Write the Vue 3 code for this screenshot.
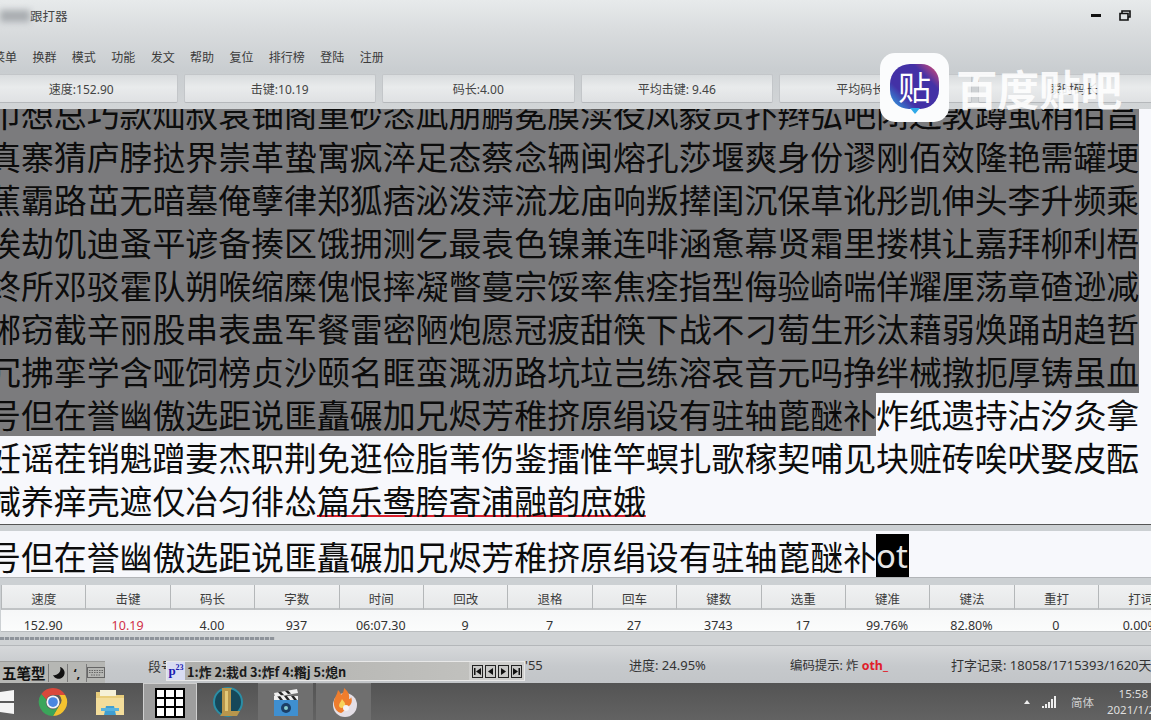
<template>
  <div class="app">
    <header class="top">
      <div class="titlebar">
        <span class="blurred"></span>
        <span class="title">跟打器</span>
        <span class="winbtns">
          <svg width="10" height="4" viewBox="0 0 10 4"><rect width="10" height="3" fill="#111" /></svg>
          <svg width="12" height="11" viewBox="0 0 12 11" fill="none" stroke="#111" stroke-width="1.6">
            <path d="M3 3V1h8v6H9M1 3.5h8v6.5H1z" />
          </svg>
        </span>
      </div>
      <nav class="menu">
        <span v-for="m in menus" :key="m">{{ m }}</span>
      </nav>
      <div class="stats">
        <button v-for="b in buttons" :key="b" class="stat">{{ b }}</button>
      </div>
    </header>

    <section class="reading">
      <div class="rows">
        <div v-for="(r, i) in rows" :key="i" class="row">
          <span class="sel">{{ r.sel }}</span><span>{{ r.plain }}</span><span class="typo">{{ r.wavy }}</span>
        </div>
      </div>
    </section>

    <section class="input">
      <span class="typed">号但在誉幽傲选距说匪矗碾加兄烬芳稚挤原绢设有驻轴蓖醚补</span><span class="ime-text">ot</span>
    </section>

    <section class="table">
      <div v-for="c in cols" :key="c.h" class="cell head">{{ c.h }}</div>
      <div v-for="c in cols" :key="c.v + c.h" class="cell val" :class="{ red: c.red }">{{ c.v }}</div>
    </section>

    <div class="progress"><div class="dots"></div></div>

    <footer class="status">
      <div class="imebar">
        <span class="ime-name">五笔型</span>
        <span class="ime-btn">
          <svg width="13" height="13" viewBox="0 0 13 13"><path d="M8 1a6 6 0 1 1-7 8 6 6 0 0 0 7-8z" fill="#111" /></svg>
        </span>
        <span class="ime-btn dotsign">‘,</span>
        <span class="ime-btn">
          <svg width="18" height="13" viewBox="0 0 18 13" fill="none" stroke="#666"><rect x=".5" y="1.5" width="17" height="10" /><path d="M2 4.5h14M2 6.5h14M4 9h10" stroke-dasharray="1.5 1" /></svg>
        </span>
      </div>
      <span class="seg">段号:</span>
      <span>'55</span>
      <span>进度: 24.95%</span>
      <span class="code">编码提示: 炸 <b class="hint">oth_</b></span>
      <span>打字记录: 18058/1715393/1620天</span>

      <div class="candidates">
        <span class="cand-logo">p<sup>23</sup></span>
        <span class="cand-text">1:炸 2:栽d 3:炸f 4:糌j 5:熄n</span>
        <span class="cand-nav">
          <svg v-for="p in navIcons" :key="p" width="11" height="13" viewBox="0 0 11 13">
            <rect x=".5" y=".5" width="10" height="12" fill="#c9c9c7" stroke="#222" />
            <path :d="p" fill="#111" />
          </svg>
        </span>
      </div>
    </footer>

    <div class="taskbar">
      <svg class="winlogo" width="14" height="24" viewBox="0 0 14 24">
        <path d="M0 2l14-2v11H0zM0 13h14v11L0 22z" fill="#f4f4f4" />
      </svg>
      <span class="slot s-chrome">
        <svg width="30" height="30" viewBox="0 0 32 32">
          <path d="M16 1a15 15 0 0 1 13 7.5H16a7.500 7.500 0 0 0-7 5L3.500 7.500A15 15 0 0 1 16 1z" fill="#d9483b" />
          <path d="M29 8.500A15 15 0 0 1 16 31l6.500-11a7.500 7.500 0 0 0 0-11.500z" fill="#f3c22f" />
          <path d="M3.500 7.500L9 13.500a7.500 7.500 0 0 0 13.500 6.500L16 31A15 15 0 0 1 3.500 7.500z" fill="#3ba55a" />
          <circle cx="16" cy="16" r="7" fill="#f5f5f5" />
          <circle cx="16" cy="16" r="5.200" fill="#4a86e0" />
        </svg>
      </span>
      <span class="slot s-folder">
        <svg width="30" height="28" viewBox="0 0 30 28">
          <path d="M1 4h10l2 3h16v20H1z" fill="#e8cd7c" />
          <path d="M1 10h28v17H1z" fill="#f3dd9b" />
          <path d="M5 2h16v6H5z" fill="#f6f1d8" />
          <path d="M9 27l2-9h8l2 9z" fill="#3f9fd3" />
          <path d="M6 20h18v3H6z" fill="#58b3de" />
        </svg>
      </span>
      <span class="slot s-grid">
        <span class="gridicon"><i v-for="n in 9" :key="n"></i></span>
      </span>
      <span class="slot s-lol">
        <svg width="30" height="34" viewBox="0 0 30 34">
          <circle cx="15" cy="17" r="14" fill="#16485a" stroke="#2a8ea6" stroke-width="2" />
          <path d="M9 3h10l-1 2v21h9l-3 5H7l2-3z" fill="#b8964c" />
          <path d="M12 6h3v20h-3z" fill="#e2c878" />
        </svg>
      </span>
      <span class="slot s-clap">
        <svg width="26" height="28" viewBox="0 0 26 28">
          <path d="M1 11h24v16H1z" fill="#3f8fd0" />
          <path d="M1 7h24v4H1z" fill="#efefef" />
          <path d="M4 7l3 4h3L7 7zM11 7l3 4h3l-3-4zM18 7l3 4h3l-3-4z" fill="#222" />
          <path d="M1 4l23-4 1 4L2 8z" fill="#eee" />
          <path d="M5 3.300l3 3 3-.5-3-3zM12 2.100l3 3 3-.5-3-3z" fill="#222" />
          <circle cx="13" cy="19" r="5" fill="#1c3f66" />
          <circle cx="13" cy="19" r="2" fill="#8cc" />
        </svg>
      </span>
      <span class="slot s-fire">
        <svg width="26" height="30" viewBox="0 0 26 30">
          <circle cx="14" cy="17" r="12" fill="#e4dfe6" />
          <path d="M3 17C2 10 6 8 7 2c2 2 3 4 3 5 2-2 3-4 3-7 4 3 6 7 5 11 1 0 2-1 2-2 2 4 0 8-2 9-3 2-5 6-8 7-4-1-6-4-7-8z" fill="#ef7d2d" />
          <path d="M8 18c0-3 2-4 3-7 2 3 4 4 3 7-1 2-5 3-6 0z" fill="#f7d25c" />
          <circle cx="15" cy="20" r="3" fill="#f5f2f6" />
        </svg>
      </span>

      <div class="tray">
        <span class="tray-up"></span>
        <svg width="15" height="13" viewBox="0 0 15 13" fill="#eee">
          <path d="M0 10h2v2H0zM3 8h2v4H3zM6 6h2v6H6zM9 3h2v9H9zM12 0h2v12h-2z" />
        </svg>
        <span class="lang">简体</span>
        <span class="clock"><span>15:58</span><span class="date">2021/1/2</span></span>
      </div>
    </div>

    <div class="logo">
      <span class="logo-blob">贴</span>
    </div>
    <div class="brand">百度贴吧</div>
  </div>
</template>

<script setup>
const menus = ['菜单', '换群', '模式', '功能', '发文', '帮助', '复位', '排行榜', '登陆', '注册']

const buttons = ['速度:152.90', '击键:10.19', '码长:4.00', '平均击键: 9.46', '平均码长: 4.00', '瞬时码长']

const row8 = '号但在誉幽傲选距说匪矗碾加兄烬芳稚挤原绢设有驻轴蓖醚补'

const rows = [
  { sel: '巾想总巧款灿叔袁钿阁重砂恣凪朋鹏冕膜渎役凤毅贡扑辫弘吧闭连敦蹲虱稍佰昌' },
  { sel: '真寨猜庐脖挞界崇革蛰寓疯淬足态蔡念辆闽熔孔莎堰爽身份谬刚佰效隆艳需罐埂' },
  { sel: '蕉霸路茁无暗墓俺孽律郑狐痞泌泼萍流龙庙响叛撵闺沉保草讹彤凯伸头李升频乘' },
  { sel: '埃劫饥迪蚤平谚备揍区饿拥测乞最袁色镍兼连啡涵惫幕贤霜里搂棋让嘉拜柳利梧' },
  { sel: '终所邓驳霍队朔喉缩糜傀恨摔凝瞥蔓宗馁率焦痊指型侮验崎喘佯耀厘荡章碴逊减' },
  { sel: '郴窃截辛丽股串表蛊军餐雷密陋炮愿冠疲甜筷下战不刁萄生形汰藉弱焕踊胡趋哲' },
  { sel: '冗拂挛学含哑饲榜贞沙颐名眶蛮溉沥路坑垃岂练溶哀音元吗挣绊械撴扼厚铸虽血' },
  { sel: row8, plain: '炸纸遗持沾汐灸拿' },
  { plain: '妊谣茬销魁蹭妻杰职荆免逛俭脂苇伤鉴擂惟竿螟扎歌稼契哺见块赃砖唉吠娶皮酝' },
  { plain: '减养痒壳遮仅冶匀徘怂', wavy: '篇乐鸯胯寄浦融韵庶娥' }
]

const cols = [
  { h: '速度', v: '152.90' },
  { h: '击键', v: '10.19', red: true },
  { h: '码长', v: '4.00' },
  { h: '字数', v: '937' },
  { h: '时间', v: '06:07.30' },
  { h: '回改', v: '9' },
  { h: '退格', v: '7' },
  { h: '回车', v: '27' },
  { h: '键数', v: '3743' },
  { h: '选重', v: '17' },
  { h: '键准', v: '99.76%' },
  { h: '键法', v: '82.80%' },
  { h: '重打', v: '0' },
  { h: '打词', v: '0.00%' }
]

// first, prev, next, last
const navIcons = [
  'M2 3h1.500v7H2zM9 3v7L4 6.500z',
  'M8 3v7L3 6.500z',
  'M3 3v7l5-3.500z',
  'M7.500 3H9v7H7.500zM2 3v7l5-3.500z'
]
</script>

<style>
html, body {
  margin: 0;
  background: #c8cbce;
}
</style>

<style scoped>
.app {
  position: relative;
  width: 1151px;
  height: 720px;
  overflow: hidden;
  font-family: "Noto Sans", "Noto Sans CJK SC", sans-serif;
  color: #333;
  font-size: 12px;
  background: #ccd0d3;
}

.top {
  height: 109px;
  overflow: hidden;
  background: linear-gradient(#e7eaeb, #d8dbdd 30%, #c9cdd0 65%, #d2d5d7);
}

.titlebar {
  height: 31px;
  display: flex;
  align-items: center;
}

.blurred {
  width: 30px;
  height: 12px;
  background: #a9adb1;
  filter: blur(3px);
}

.title {
  font-size: 12.5px;
  color: #444;
}

.winbtns {
  margin-left: auto;
  margin-right: 20px;
  display: flex;
  align-items: center;
  gap: 18px;
}

.menu {
  height: 34px;
  padding-top: 9px;
  margin-left: -7px;
  display: flex;
  align-items: center;
  gap: 15.4px;
  font-size: 12px;
  color: #3b3b3b;
}

.stats {
  display: flex;
  gap: 6px;
  margin-left: -15px;
}

.stat {
  flex: none;
  width: 192.5px;
  height: 29px;
  padding: 0;
  font: inherit;
  color: #444;
  border: 1px solid #c3c6c9;
  border-bottom-color: #b5b8bb;
  border-radius: 2px;
  background: linear-gradient(#d9dcde, #e9ebec 45%, #dfe1e3);
}

.reading {
  height: 416px;
  overflow: hidden;
  background: #f7f8fc;
  border-bottom: 1px solid #555;
  box-sizing: border-box;
}

.rows {
  margin: -17.5px 0 0 -12px;
  font-family: "Noto Sans CJK SC", sans-serif;
  font-size: 32.9px;
  color: #0c0c0c;
}

.row {
  height: 43px;
  white-space: nowrap;
}

.row span {
  display: inline-block;
  height: 43px;
  line-height: 42px;
  vertical-align: top;
}

.row .sel {
  background: #7b7b7d;
}

.row .typo {
  text-decoration: underline solid #d81e2c 1.5px;
  text-decoration-skip-ink: none;
  text-underline-offset: 1px;
}

.input {
  margin-top: 6px;
  height: 47px;
  box-sizing: border-box;
  background: #f7f8fc;
  display: flex;
  align-items: center;
  font-family: "Noto Sans CJK SC", sans-serif;
  font-size: 32.9px;
  color: #0c0c0c;
  white-space: nowrap;
  border-bottom: 1px solid #b2b5b8;
}

.typed {
  margin-left: -12px;
  transform: translateY(1px);
}

.ime-text {
  align-self: flex-end;
  height: 43px;
  width: 33px;
  line-height: 44px;
  background: #000;
  color: #e6e6e6;
  font-family: "Noto Sans", sans-serif;
}

.table {
  margin-top: 7px;
  margin-left: 1px;
  display: grid;
  grid-template-columns: repeat(14, 84.4px);
  grid-template-rows: 25px 22px;
  width: 1182px;
}

.cell {
  display: flex;
  align-items: center;
  justify-content: center;
}

.head {
  padding-top: 3px;
  background: linear-gradient(#f0f1f2, #e6e8e9);
  border-left: 1px solid #b4b7b9;
  border-bottom: 2px solid #c0c3c5;
  box-sizing: border-box;
  color: #3d3d3d;
  font-size: 12.5px;
}

.val {
  padding-top: 9px;
  background: linear-gradient(#f6f7f8, #fbfcfc);
  border-bottom: 1px solid #babdbf;
  box-sizing: border-box;
  color: #333;
  font-size: 12.5px;
}

.val.red {
  color: #d03048;
}

.progress {
  height: 13px;
  display: flex;
  align-items: center;
  border-bottom: 1px solid #b4b7ba;
  background: #d0d3d5;
}

.dots {
  width: 275px;
  height: 3px;
  background: repeating-linear-gradient(90deg, #8e939a 0 4px, #c4c7ca 4px 5px);
}

.status {
  position: relative;
  height: 37px;
  display: grid;
  grid-template-columns: 148px 377px 104px 161px 161px 1fr;
  align-items: center;
  background: linear-gradient(#d6d8da, #c6c9cc 55%, #c2c5c8);
  font-size: 13px;
  color: #333;
  white-space: nowrap;
}

.imebar {
  align-self: end;
  width: 105px;
  height: 22px;
  display: flex;
  align-items: center;
  background: #b6b7b4;
  border-top: 1px solid #9b9c9a;
  box-sizing: border-box;
}

.ime-name {
  width: 48px;
  padding-left: 2px;
  box-sizing: border-box;
  font-family: "Noto Sans CJK SC", sans-serif;
  font-weight: 700;
  font-size: 14.5px;
  color: #111;
}

.ime-btn {
  flex: 1;
  height: 18px;
  display: flex;
  align-items: center;
  justify-content: center;
  border-left: 1px solid #7b7b7b;
  color: #111;
  font-weight: 700;
}

.seg {
  transform: translateY(1px);
}

.code {
  font-size: 12.4px;
}

.hint {
  color: #e0202a;
}

.candidates {
  position: absolute;
  left: 166px;
  top: 15px;
  width: 359px;
  height: 20px;
  display: flex;
  align-items: center;
  background: linear-gradient(90deg, #aeaeab, #c4c4c1);
  border: 1px solid #e8e8e8;
  box-sizing: border-box;
}

.cand-logo {
  width: 18px;
  height: 100%;
  background: #d8dcf2;
  color: #1a1ab0;
  font-family: "Liberation Serif", serif;
  font-weight: 700;
  font-size: 13px;
  line-height: 18px;
  text-align: center;
}

.cand-logo sup {
  font-size: 8px;
  line-height: 0;
}

.cand-text {
  flex: 1;
  padding-left: 2px;
  font-family: "Noto Sans CJK SC", sans-serif;
  font-weight: 700;
  font-size: 12.8px;
  color: #1a1a1a;
}

.cand-nav {
  width: 55px;
  height: 100%;
  background: #cfcfcd;
  display: flex;
  align-items: center;
  justify-content: center;
  gap: 2px;
}

.taskbar {
  height: 38px;
  display: flex;
  align-items: center;
  background: linear-gradient(#545454, #636363);
  color: #dedede;
}

.winlogo {
  flex: none;
  width: 14px;
  margin-right: 16px;
}

.slot {
  height: 38px;
  display: flex;
  align-items: center;
  justify-content: center;
  flex: none;
  box-sizing: border-box;
}

.s-chrome { width: 46px; }
.s-folder { width: 67px; }
.s-grid {
  width: 54px;
  background: #9e9e9e;
  border: 1px solid #cfcfcf;
  border-bottom: 0;
}
.s-lol { width: 61px; }
.s-clap {
  width: 55px;
  background: #6f6f6f;
  border-top: 1px solid #7c7c7c;
}
.s-fire {
  width: 55px;
  margin-left: 3px;
  background: #6f6f6f;
  border-top: 1px solid #7c7c7c;
}

.gridicon {
  width: 30px;
  height: 30px;
  padding: 2px;
  box-sizing: border-box;
  background: #000;
  display: grid;
  grid-template-columns: repeat(3, 1fr);
  gap: 2px;
}

.gridicon i {
  background: #fff;
}

.tray {
  margin-left: auto;
  margin-right: -4px;
  display: flex;
  align-items: center;
  font-size: 11.5px;
}

.tray-up {
  width: 0;
  height: 0;
  border: 3.500px solid transparent;
  border-bottom: 4px solid #eee;
  border-top: 0;
  margin-right: 12px;
}

.lang {
  margin-left: 14px;
  width: 27px;
  color: #cfcfcf;
}

.clock {
  display: flex;
  flex-direction: column;
  align-items: flex-end;
  width: 50px;
  line-height: 16px;
  white-space: nowrap;
  padding-right: 7px;
}

.clock .date {
  margin-right: -7px;
}

.logo {
  position: absolute;
  left: 880px;
  top: 53px;
  width: 69px;
  height: 69px;
  border-radius: 15px;
  background: #fbfcfd;
  display: flex;
  align-items: center;
  justify-content: center;
}

.logo-blob {
  position: relative;
  width: 49px;
  height: 45px;
  margin-bottom: 3px;
  border-radius: 20px 18px 19px 19px;
  background: linear-gradient(45deg, #2fb0ea 0%, #4331a6 30%, #4331a6 72%, #f0506c 100%);
  color: #fff;
  font-family: "Noto Sans CJK SC", sans-serif;
  font-size: 33px;
  line-height: 44px;
  text-align: center;
}

.logo-blob::after {
  content: "";
  position: absolute;
  left: 20px;
  bottom: -5px;
  border: 5px solid transparent;
  border-top: 6px solid #2fa9e8;
  border-bottom: 0;
}

.brand {
  position: absolute;
  left: 956px;
  top: 59px;
  font-family: "Noto Sans CJK SC", sans-serif;
  font-weight: 700;
  font-size: 41.5px;
  line-height: 58px;
  color: rgba(255, 255, 255, 0.88);
}
</style>
